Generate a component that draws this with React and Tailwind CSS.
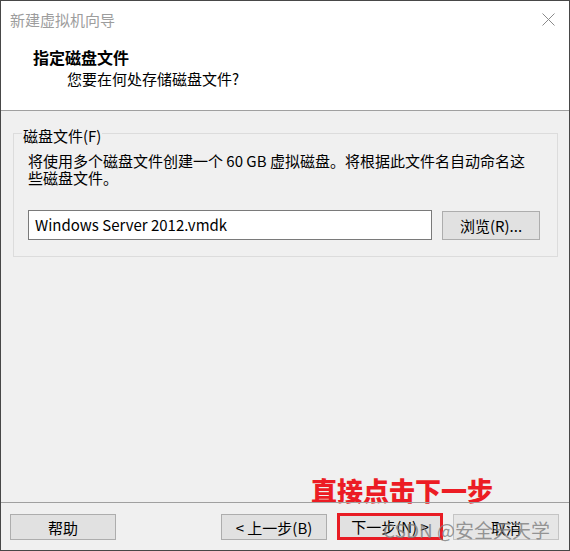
import React from 'react';

// Windows-style "new virtual machine wizard" page: choose disk file
const font = "font-['Microsoft_YaHei','Noto_Sans_CJK_SC',sans-serif]";

function WinButton({ children, size = 'w-[106px] h-[26px]', look = 'bg-[#e1e1e1] border border-[#adadad]' }) {
  return (
    <button
      type="button"
      className={`${size} ${look} text-[15px] leading-none text-black flex items-center justify-center`}
    >
      {children}
    </button>
  );
}

export default function App() {
  return (
    <div
      className={`relative w-[570px] h-[551px] border border-[#474747] bg-[#f0f0f0] flex flex-col overflow-hidden ${font}`}
    >
      {/* Header */}
      <div className="h-[110px] shrink-0 bg-white border-b border-[#a0a0a0]">
        <div className="h-[38px] flex items-center justify-between pl-[9px] pr-[14px]">
          <span className="text-[15px] text-[#9d9d9d]">新建虚拟机向导</span>
          <svg width="13" height="13" viewBox="0 0 13 13" className="mb-[1px]">
            <path d="M0.5 0.5 L12.5 12.5 M12.5 0.5 L0.5 12.5" stroke="#8a8a8a" strokeWidth="1" fill="none" />
          </svg>
        </div>
        <div className="mt-[8px] pl-[32px] text-[16px] font-bold leading-[20px] text-black">
          指定磁盘文件
        </div>
        <div className="mt-[2px] pl-[66px] text-[15px] leading-[20px] text-black">
          您要在何处存储磁盘文件?
        </div>
      </div>

      {/* Body */}
      <div className="flex-1 flex flex-col">
        <fieldset className="mt-[12px] ml-[12px] w-[545px] border border-[#dcdcdc] pl-[14px] pr-[17px] pt-[9px] pb-[16px]">
          <legend className="-ml-[6px] px-[1px] pt-[6px] text-[15px] leading-[14px] text-black">
            磁盘文件(F)
          </legend>
          <p className="text-[15px] leading-[17px] text-black">
            将使用多个磁盘文件创建一个 60 GB 虚拟磁盘。将根据此文件名自动命名这
            <br />
            些磁盘文件。
          </p>
          <div className="mt-[24px] flex items-center gap-[10px]">
            <div className="flex-1 h-[30px] bg-white border border-[#7a7a7a] flex items-center pl-[6px] text-[15px] text-black">
              Windows Server 2012.vmdk
            </div>
            <WinButton size="w-[98px] h-[29px]">浏览(R)...</WinButton>
          </div>
        </fieldset>

        <div className="flex-1" />
        <div className="pl-[310px] text-[26px] leading-[25px] font-black text-[#ec1c24]">
          直接点击下一步
        </div>
      </div>

      {/* Footer */}
      <div className="h-[48px] shrink-0 border-t border-[#a0a0a0] pl-[9px] pr-[10px] pb-[10px] flex items-end justify-between">
        <WinButton>帮助</WinButton>
        <div className="flex items-end gap-[10px]">
          <WinButton>&lt; 上一步(B)</WinButton>
          <WinButton size="w-[106px] h-[27px]" look="bg-[#e1e1e1] border-[3px] border-[#e81c24]">
            下一步(N) &gt;
          </WinButton>
          <WinButton look="bg-[#e6e6e6] border border-[#c4c4c4]">取消</WinButton>
        </div>
      </div>

      {/* CSDN watermark */}
      <div className="absolute left-[382px] top-[517px] text-[19px] leading-[24px] text-[#7d7d7d]/80 whitespace-nowrap pointer-events-none">
        CSDN @安全天天学
      </div>
    </div>
  );
}
